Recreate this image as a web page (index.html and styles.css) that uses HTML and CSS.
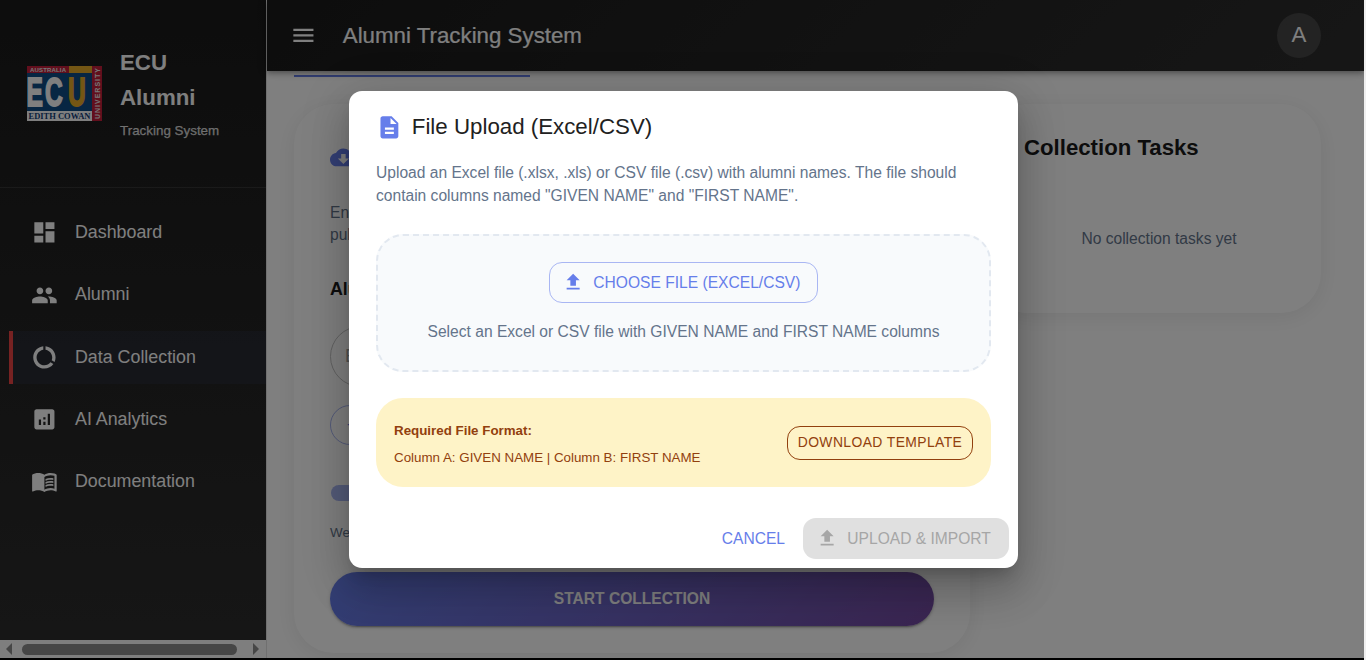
FILE: index.html
```html
<!DOCTYPE html>
<html lang="en">
<head>
<meta charset="utf-8">
<title>Alumni Tracking System</title>
<link rel="stylesheet" href="styles.css">
</head>
<body>
<div class="app">
  <aside class="sidebar">
    <div class="brand">
      <svg class="brand-logo" viewBox="0 0 75 55">
        <rect width="75" height="55" fill="#c41e3a"/>
        <rect x="42" width="23" height="7" fill="#e8ac28"/>
        <rect y="7" width="65" height="38" fill="#0f4c86"/>
        <rect y="45" width="65" height="10" fill="#fff"/>
        <text x="3" y="5.6" class="logo-small" font-size="6" textLength="36">AUSTRALIA</text>
        <text transform="translate(0 40.2) scale(.6 1)" class="logo-big" font-size="41" fill="#fff" stroke="#fff"><tspan x="-1">E</tspan><tspan x="30">C</tspan><tspan x="68.5" fill="#e8ac28" stroke="#e8ac28">U</tspan></text>
        <text x="1.5" y="52.8" class="logo-serif" font-size="8" textLength="62" lengthAdjust="spacingAndGlyphs">EDITH COWAN</text>
        <text transform="translate(72.7 53) rotate(-90)" class="logo-small" font-size="7" textLength="51">UNIVERSITY</text>
      </svg>
      <div class="brand-text">
        <div class="brand-name">ECU Alumni</div>
        <div class="brand-sub">Tracking System</div>
      </div>
    </div>
    <nav class="nav">
      <a class="nav-item"><svg class="icon" viewBox="0 0 24 24"><path d="M3 13h8V3H3v10zm0 8h8v-6H3v6zm10 0h8V11h-8v10zm0-18v6h8V3h-8z"/></svg>Dashboard</a>
      <a class="nav-item"><svg class="icon" viewBox="0 0 24 24"><path d="M16 11c1.66 0 2.99-1.34 2.99-3S17.66 5 16 5c-1.66 0-3 1.34-3 3s1.34 3 3 3zm-8 0c1.66 0 2.99-1.34 2.99-3S9.66 5 8 5C6.34 5 5 6.34 5 8s1.34 3 3 3zm0 2c-2.33 0-7 1.17-7 3.5V19h14v-2.5c0-2.33-4.67-3.5-7-3.5zm8 0c-.29 0-.62.02-.97.05 1.16.84 1.97 1.97 1.97 3.45V19h6v-2.5c0-2.33-4.67-3.5-7-3.5z"/></svg>Alumni</a>
      <a class="nav-item nav-item-active"><svg class="icon" viewBox="0 0 24 24"><path d="M13 2.05v3.03c3.39.49 6 3.39 6 6.92 0 .9-.18 1.75-.48 2.54l2.6 1.53c.56-1.24.88-2.62.88-4.07 0-5.18-3.95-9.45-9-9.95zM12 19c-3.87 0-7-3.13-7-7 0-3.53 2.61-6.43 6-6.92V2.05c-5.06.5-9 4.76-9 9.95 0 5.52 4.47 10 9.99 10 3.31 0 6.24-1.61 8.06-4.09l-2.6-1.53C16.17 17.98 14.21 19 12 19z"/></svg>Data Collection</a>
      <a class="nav-item"><svg class="icon" viewBox="0 0 24 24"><path d="M19 3H5c-1.1 0-2 .9-2 2v14c0 1.1.9 2 2 2h14c1.1 0 2-.9 2-2V5c0-1.1-.9-2-2-2zM9 17H7v-5h2v5zm4 0h-2v-3h2v3zm0-5h-2v-2h2v2zm4 5h-2V7h2v10z"/></svg>AI Analytics</a>
      <a class="nav-item"><svg class="icon" viewBox="0 0 24 24"><path d="M21 5c-1.11-.35-2.33-.5-3.5-.5-1.95 0-4.05.4-5.5 1.5-1.45-1.1-3.55-1.5-5.5-1.5S2.45 4.9 1 6v14.65c0 .25.25.5.5.5.1 0 .15-.05.25-.05C3.1 20.45 5.05 20 6.5 20c1.95 0 4.05.4 5.5 1.5 1.35-.85 3.8-1.5 5.5-1.5 1.65 0 3.35.3 4.75 1.05.1.05.15.05.25.05.25 0 .5-.25.5-.5V6c-.6-.45-1.25-.75-2-1zm0 13.5c-1.1-.35-2.3-.5-3.5-.5-1.7 0-4.15.65-5.5 1.5V8c1.35-.85 3.8-1.5 5.5-1.5 1.2 0 2.4.15 3.5.5v11.5z"/><path d="M17.5 10.5c.88 0 1.73.09 2.5.26V9.24c-.79-.15-1.64-.24-2.5-.24-1.7 0-3.24.29-4.5.83v1.66c1.13-.64 2.7-.99 4.5-.99zM13 12.49v1.66c1.13-.64 2.7-.99 4.5-.99.88 0 1.73.09 2.5.26V11.9c-.79-.15-1.64-.24-2.5-.24-1.7 0-3.24.3-4.5.83zM17.5 14.33c-1.7 0-3.24.29-4.5.83v1.66c1.13-.64 2.7-.99 4.5-.99.88 0 1.73.09 2.5.26v-1.52c-.79-.16-1.64-.24-2.5-.24z"/></svg>Documentation</a>
    </nav>
    <div class="scrollbar">
      <svg class="arrow" viewBox="0 0 6 12"><path d="M6 0v12L0 6z"/></svg>
      <div class="thumb"></div>
      <svg class="arrow" viewBox="0 0 6 12"><path d="M0 0v12l6-6z"/></svg>
    </div>
  </aside>
  <div class="page">
    <header class="topbar">
      <svg class="icon" viewBox="0 0 24 24"><path d="M3 18h18v-2H3v2zm0-5h18v-2H3v2zm0-7v2h18V6H3z"/></svg>
      <div class="topbar-title">Alumni Tracking System</div>
      <div class="avatar">A</div>
    </header>
    <main class="main">
      <div class="tab-indicator"></div>
      <div class="columns">
        <section class="card form-card">
          <svg class="icon cloud" viewBox="0 0 24 24"><path d="M19.35 10.04C18.67 6.59 15.64 4 12 4 9.11 4 6.6 5.64 5.35 8.04 2.34 8.36 0 10.91 0 14c0 3.31 2.69 6 6 6h13c2.76 0 5-2.24 5-5 0-2.64-2.05-4.78-4.65-4.96zM17 13l-5 5-5-5h3V9h4v4h3z"/></svg>
          <p class="form-text">Enter<br>publicly</p>
          <div class="form-label">Alumni</div>
          <div class="field">E</div>
          <div class="add-button">+</div>
          <div class="chip"></div>
          <div class="hint">Web</div>
          <div class="start-button">START COLLECTION</div>
        </section>
        <section class="card tasks-card">
          <h2 class="tasks-title">Collection Tasks</h2>
          <p class="tasks-empty">No collection tasks yet</p>
        </section>
      </div>
    </main>
  </div>
  <div class="backdrop">
    <div class="dialog">
      <div class="dialog-title">
        <svg class="icon" viewBox="0 0 24 24"><path d="M14 2H6c-1.1 0-1.99.9-1.99 2L4 20c0 1.1.89 2 1.99 2H18c1.1 0 2-.9 2-2V8l-6-6zm2 16H8v-2h8v2zm0-4H8v-2h8v2zm-3-5V3.5L18.5 9H13z"/></svg>
        <span>File Upload (Excel/CSV)</span>
      </div>
      <div class="dialog-body">
        <p class="dialog-text">Upload an Excel file (.xlsx, .xls) or CSV file (.csv) with alumni names. The file should contain columns named "GIVEN NAME" and "FIRST NAME".</p>
        <div class="dropzone">
          <div class="choose-button"><svg class="icon-small" viewBox="0 0 24 24"><path d="M9 16h6v-6h4l-7-7-7 7h4zm-4 2h14v2H5z"/></svg>CHOOSE FILE (EXCEL/CSV)</div>
          <div class="dropzone-text">Select an Excel or CSV file with GIVEN NAME and FIRST NAME columns</div>
        </div>
        <div class="format">
          <div class="format-info">
            <div class="format-title">Required File Format:</div>
            <div class="format-text">Column A: GIVEN NAME | Column B: FIRST NAME</div>
          </div>
          <div class="template-button">DOWNLOAD TEMPLATE</div>
        </div>
      </div>
      <div class="dialog-actions">
        <div class="cancel-button">CANCEL</div>
        <div class="import-button"><svg class="icon-small" viewBox="0 0 24 24"><path d="M9 16h6v-6h4l-7-7-7 7h4zm-4 2h14v2H5z"/></svg>UPLOAD &amp; IMPORT</div>
      </div>
    </div>
  </div>
</div>
</body>
</html>
```

FILE: styles.css
```css
* { box-sizing: border-box; }
html { background: #f0f0f0; }
body {
  margin: 0;
  height: 660px;
  width: 1364px;
  background: #000;
  font-family: "Liberation Sans", Arial, sans-serif;
  overflow: hidden;
}
p, h2 { margin: 0; }
.app {
  position: relative;
  display: flex;
  width: 1364px;
  height: 658px;
  overflow: hidden;
  background: #fff;
}
.icon { width: 26.8px; height: 26.8px; fill: currentColor; flex: none; }
.icon-small { width: 22.3px; height: 22.3px; fill: currentColor; flex: none; }

.sidebar {
  width: 267px;
  flex: none;
  display: flex;
  flex-direction: column;
  border-right: 1px solid #e0e0e0;
  background: linear-gradient(180deg, #1a1a1a 0%, #2d2d2d 100%);
  color: #fff;
}
.brand {
  height: 188px;
  display: flex;
  align-items: center;
  gap: 18px;
  padding: 0 27px;
  border-bottom: 1px solid rgba(255, 255, 255, .1);
}
.brand-logo { width: 75px; height: 55px; flex: none; }
.logo-small { font-family: "Liberation Sans", sans-serif; font-weight: 700; fill: #eee; }
.logo-big { font-family: "Liberation Sans", sans-serif; font-weight: 700; stroke-width: 1.8px; }
.logo-serif { font-family: "Liberation Serif", serif; font-weight: 700; fill: #0f3c78; }
.brand-name { width: 90px; font-size: 22.3px; font-weight: 700; line-height: 35px; }
.brand-sub { margin-top: 5px; font-size: 13.4px; line-height: 22px; color: rgba(255, 255, 255, .8); white-space: nowrap; -webkit-text-stroke: .25px; }
.nav {
  flex: 1;
  display: flex;
  flex-direction: column;
  gap: 9px;
  padding: 18px 0 0 9px;
}
.nav-item {
  height: 53.3px;
  display: flex;
  align-items: center;
  gap: 17.4px;
  padding-left: 17.8px;
  border-left: 4px solid transparent;
  font-size: 17.84px;
}
.nav-item-active { border-left-color: #ef4444; background: rgba(102, 126, 234, .07); }
.scrollbar {
  height: 18px;
  display: flex;
  align-items: center;
  padding: 0 7px 0 6px;
  background: #fcfcfc;
}
.arrow { width: 6px; height: 12px; fill: #8c8c8c; flex: none; }
.thumb { width: 215px; height: 11px; margin: 0 16px 0 10px; border-radius: 6px; background: #8c8c8c; }

.page { flex: 1; display: flex; flex-direction: column; min-width: 0; }
.topbar {
  position: relative;
  z-index: 1;
  height: 71px;
  flex: none;
  display: flex;
  align-items: center;
  padding: 0 43px 0 23px;
  background: linear-gradient(135deg, #1a1a1a 0%, #2d2d2d 100%);
  color: #fff;
  box-shadow: 0 2px 4px -1px rgba(0, 0, 0, .2), 0 4px 5px rgba(0, 0, 0, .14), 0 1px 11px rgba(0, 0, 0, .12);
}
.topbar-title { flex: 1; margin-left: 26px; font-size: 22.3px; -webkit-text-stroke: .2px; }
.avatar {
  width: 44px;
  height: 45px;
  border-radius: 50%;
  display: flex;
  align-items: center;
  justify-content: center;
  padding-bottom: 1px;
  background: rgba(255, 255, 255, .13);
  font-size: 22.3px;
}
.main { flex: 1; padding: 4px 43px 0 27px; min-height: 0; }
.tab-indicator { width: 236px; height: 2px; background: #667eea; }
.columns { display: grid; grid-template-columns: 676px 333px; gap: 18px; align-items: start; margin-top: 27px; }
.card { border-radius: 40px; background: #fff; box-shadow: 0 4px 22px rgba(0, 0, 0, .08); }
.form-card { height: 549px; padding: 40px 36px 0; }
.cloud { display: block; color: #667eea; }
.form-text { margin-top: 31px; font-size: 15.6px; line-height: 22.3px; color: #64748b; }
.form-label { margin-top: 31px; font-size: 17.84px; font-weight: 700; line-height: 24px; color: #1a1a1a; }
.field {
  height: 61px;
  margin-top: 25px;
  padding-left: 14px;
  border: 1px solid #c4c4c4;
  border-radius: 36px;
  font-size: 17.84px;
  line-height: 59px;
  color: #a2a2a2;
}
.add-button {
  width: 180px;
  height: 40px;
  margin-top: 18px;
  padding-left: 16px;
  border: 1px solid #a9b6f3;
  border-radius: 20px;
  line-height: 37px;
  color: #667eea;
}
.chip { width: 40px; height: 16px; margin: 40px 0 0 1px; border-radius: 8px; background: #a9b6f3; }
.hint { margin-top: 22px; font-size: 13.4px; line-height: 20px; color: #64748b; }
.start-button {
  height: 54px;
  margin-top: 29px;
  border-radius: 27px;
  background: linear-gradient(135deg, #667eea 0%, #764ba2 100%);
  box-shadow: 0 3px 1px -2px rgba(0, 0, 0, .2), 0 2px 2px rgba(0, 0, 0, .14), 0 1px 5px rgba(0, 0, 0, .12);
  color: #fff;
  font-size: 15.6px;
  font-weight: 700;
  line-height: 53px;
  text-align: center;
}
.tasks-card { height: 209px; padding: 30px 36px; }
.tasks-title { font-size: 22.2px; font-weight: 700; line-height: 28px; color: #1a1a1a; }
.tasks-empty { margin-top: 66px; padding-left: 9px; font-size: 15.6px; line-height: 22px; text-align: center; color: #64748b; }

.backdrop {
  position: absolute;
  inset: 0;
  z-index: 2;
  display: flex;
  align-items: center;
  justify-content: center;
  padding: 1px 0 0 3px;
  background: rgba(0, 0, 0, .5);
}
.dialog {
  width: 669px;
  height: 477px;
  border-radius: 13px;
  background: #fff;
  box-shadow: 0 11px 15px -7px rgba(0, 0, 0, .2), 0 24px 38px 3px rgba(0, 0, 0, .14), 0 9px 46px 8px rgba(0, 0, 0, .12);
}
.dialog-title {
  height: 70px;
  display: flex;
  align-items: center;
  gap: 9px;
  padding: 2px 27px 0;
  font-size: 22.3px;
  color: #212121;
}
.dialog-title .icon { color: #667eea; }
.dialog-body { padding: 0 27px; }
.dialog-text { font-size: 15.6px; line-height: 23px; color: #64748b; }
.dropzone {
  height: 138px;
  margin-top: 27px;
  display: flex;
  flex-direction: column;
  align-items: center;
  padding-top: 26px;
  border: 2px dashed #e2e8f0;
  border-radius: 27px;
  background: #f8fafc;
}
.choose-button {
  width: 269px;
  height: 41px;
  display: flex;
  align-items: center;
  gap: 9px;
  padding-left: 12px;
  border: 1px solid #a9b6f3;
  border-radius: 13px;
  font-size: 15.6px;
  color: #667eea;
}
.dropzone-text { margin-top: 18px; font-size: 15.6px; line-height: 22px; color: #64748b; }
.format {
  height: 89px;
  margin-top: 26px;
  display: flex;
  align-items: center;
  justify-content: space-between;
  padding: 0 18px;
  border-radius: 27px;
  background: #fef3c7;
  color: #92400e;
}
.format-info { padding-top: 3px; }
.format-title { font-size: 13.35px; font-weight: 700; line-height: 22px; }
.format-text { margin-top: 5px; font-size: 13.35px; line-height: 22px; }
.template-button {
  width: 186px;
  height: 34px;
  border: 1px solid #92400e;
  border-radius: 13px;
  font-size: 13.9px;
  letter-spacing: .4px;
  line-height: 31px;
  text-align: center;
}
.dialog-actions {
  display: flex;
  justify-content: flex-end;
  align-items: center;
  gap: 18px;
  margin-top: 31px;
  padding-right: 9px;
  font-size: 15.6px;
}
.cancel-button { color: #667eea; }
.import-button {
  width: 206px;
  height: 41px;
  display: flex;
  align-items: center;
  gap: 9px;
  padding-left: 13px;
  border-radius: 13px;
  background: #e0e0e0;
  color: #a6a6a6;
}
```
